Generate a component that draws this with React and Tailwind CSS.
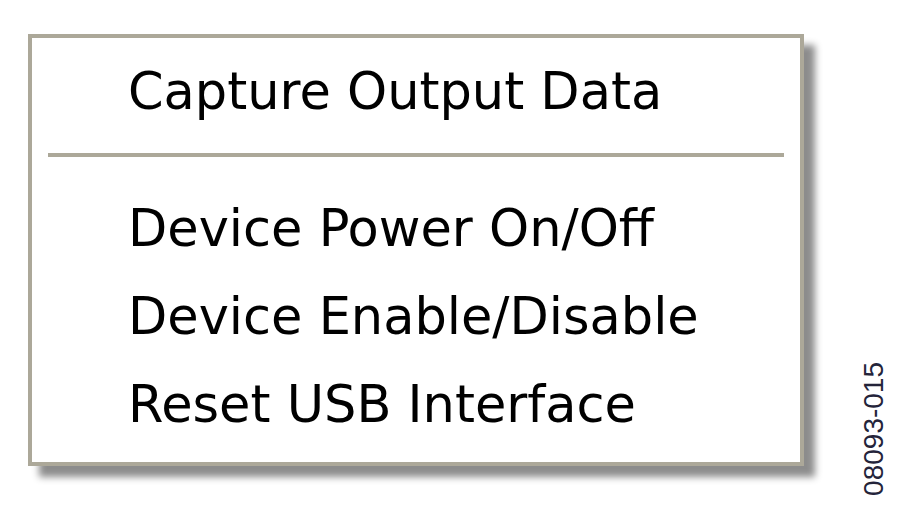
import React from "react";

const items = ["Device Power On/Off", "Device Enable/Disable", "Reset USB Interface"];

const App = () => {
  return (
    <div className="w-[900px] h-[513px] bg-white overflow-hidden">
      <div className="flex pt-[34px] pl-[28px]">
        {/* context menu */}
        <div
          className="shrink-0 w-[776px] h-[432px] border-4 border-[#aca899] bg-white shadow-[11px_11px_7px_rgba(0,0,0,0.45)] pt-[10px] text-black"
          style={{ fontFamily: '"DejaVu Sans", Verdana, sans-serif' }}
        >
          <div className="h-[88px] leading-[88px] text-[51px] pl-[96px]">Capture Output Data</div>
          <div className="mt-[17px] mb-[28px] mx-4 h-[4px] bg-[#aca899]" />
          {items.map((label) => (
            <div key={label} className="h-[88px] leading-[88px] text-[51px] pl-[96px] whitespace-nowrap">
              {label}
            </div>
          ))}
        </div>
        {/* figure number */}
        <div
          className="shrink-0 whitespace-nowrap ml-[56px] mt-[328px] text-[28px] leading-none text-[#24243a] rotate-180 [writing-mode:vertical-rl]"
          style={{ fontFamily: '"Liberation Sans", Arial, sans-serif' }}
        >
          08093-015
        </div>
      </div>
    </div>
  );
};

export default App;
